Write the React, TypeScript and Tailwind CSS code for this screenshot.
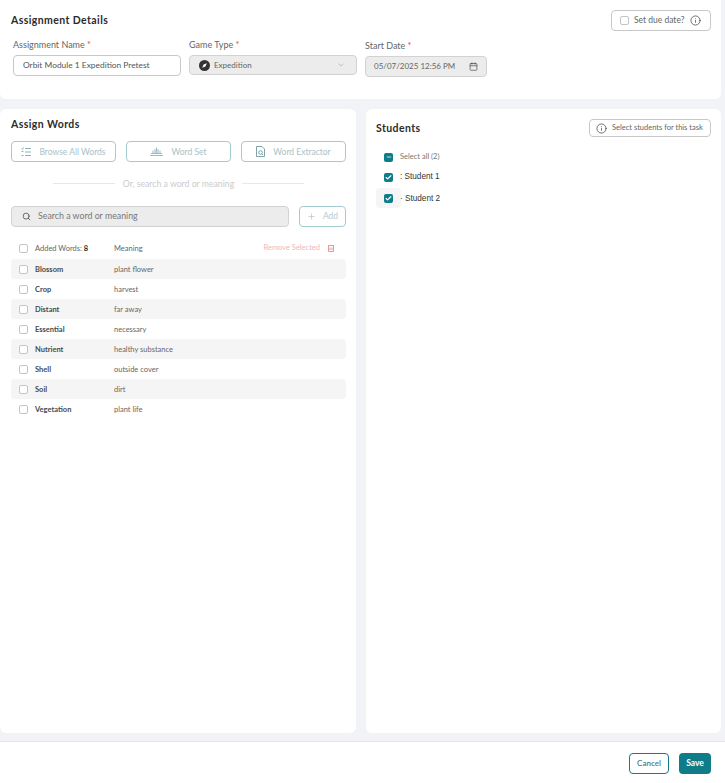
import React from 'react';
import { Search, Plus, Calendar, ChevronDown, Info, Check, Minus } from 'lucide-react';

const words = [
    ['Blossom', 'plant flower'],
    ['Crop', 'harvest'],
    ['Distant', 'far away'],
    ['Essential', 'necessary'],
    ['Nutrient', 'healthy substance'],
    ['Shell', 'outside cover'],
    ['Soil', 'dirt'],
    ['Vegetation', 'plant life'],
];

const Box = () => <span className="block shrink-0 w-[9px] h-[9px] rounded-[2px] border border-[#c4c4c4] bg-white"></span>;

const Ticked = ({ minus }: { minus?: boolean }) => (
    <span className="flex items-center justify-center w-[9px] h-[9px] rounded-[2px] bg-[#0f7c8a] text-white">
        {minus ? <Minus size={6} strokeWidth={3} /> : <Check size={7} strokeWidth={4} />}
    </span>
);

const Label = ({ text }: { text: string }) => (
    <div className="text-[9px] leading-[12px] text-[#666]">
        {text} <span className="text-[#e0492f]">*</span>
    </div>
);

const ToolButton = ({ icon, text }: { icon: React.ReactNode; text: string }) => (
    <button className="flex-1 h-[21px] flex items-center justify-center gap-[8px] rounded-[4px] border border-[#a3ccd1] text-[8.5px] text-[#a9c2c6]">
        {icon}
        <span className="pt-[1px]">{text}</span>
    </button>
);

const ListIcon = () => (
    <svg width="10" height="10" viewBox="0 0 10 10" fill="none" stroke="#8fb3b9" strokeWidth="1">
        <path d="M4 1.5h6M4 5h6M4 8.5h6" />
        <path d="M0.5 1.5l1 1 1-2M0.5 4.5h2M0.5 8.5h2" />
    </svg>
);

const SetIcon = () => (
    <svg width="13" height="9" viewBox="0 0 13 9" fill="none" stroke="#9bbcc1" strokeWidth="1">
        <path d="M0 8.5h13M1 6.5h11" />
        <path d="M3 6V3.5M5 6V2M6.5 6V0.5M8 6V2M10 6V3.5" />
    </svg>
);

const DocIcon = () => (
    <svg width="9" height="11" viewBox="0 0 9 11" fill="none" stroke="#7fa3a9" strokeWidth="1">
        <path d="M0.5 0.5h5.5l2.5 2.5v7.5h-8z" />
        <circle cx="4.5" cy="6.5" r="1.8" />
        <path d="M6 8l1 1" />
    </svg>
);

const GameIcon = () => (
    <svg width="11" height="11" viewBox="0 0 11 11" className="mr-[4px]">
        <circle cx="5.5" cy="5.5" r="5.5" fill="#333" />
        <path d="M7.8 3.2L6.4 6.4 3.2 7.8 4.6 4.6z" fill="#fff" />
    </svg>
);

const TrashIcon = () => (
    <svg width="6" height="7" viewBox="0 0 6 7" fill="none" stroke="#e79a95" strokeWidth="1" className="ml-[8px] mr-[12px]">
        <path d="M0 0.5h6M0.5 1v5.5h5V1M2 2.5v2.5M4 2.5v2.5" />
    </svg>
);

const App = () => {
    return (
        <div className="w-[725px] h-[783px] flex flex-col bg-[#f1f3f7] overflow-hidden font-['Lato',sans-serif]">
            <div className="flex-1 flex flex-col gap-[10px] pr-[4px] pb-[8px]">
                <section className="h-[99px] bg-white rounded-b-[6px] pl-[11px] pr-[10px] pt-[10px]">
                    <div className="flex items-center justify-between h-[21px]">
                        <h2 className="text-[10.5px] font-bold tracking-[0.4px] text-[#2b2b2b]">Assignment Details</h2>
                        <div className="flex items-center gap-[5px] h-[21px] w-[100px] pl-[8px] rounded-[4px] border border-[#c8c8c8] text-[8.5px] text-[#666]">
                            <Box />
                            Set due date?
                            <Info size={11} strokeWidth={1.5} className="ml-[1px] text-[#333]" />
                        </div>
                    </div>
                    <div className="flex items-start gap-[8px] ml-[2px] mt-[8px]">
                        <div className="w-[168px]">
                            <Label text="Assignment Name" />
                            <div className="mt-[4px] h-[21px] flex items-center px-[9px] pb-[1px] rounded-[4px] border border-[#c8c8c8] text-[8.4px] text-[#555]">Orbit Module 1 Expedition Pretest</div>
                        </div>
                        <div className="w-[168px]">
                            <Label text="Game Type" />
                            <div className="mt-[4px] h-[20px] flex items-center px-[9px] rounded-[4px] border border-[#d2d2d2] bg-[#ececec] text-[8px] text-[#666]">
                                <GameIcon />
                                <span className="pb-[1px]">Expedition</span>
                                <ChevronDown size={8} className="ml-auto mr-[2px] text-[#aaa]" />
                            </div>
                        </div>
                        <div className="w-[122px] mt-[1px]">
                            <Label text="Start Date" />
                            <div className="mt-[4px] h-[21px] flex items-center justify-between px-[8px] rounded-[4px] border border-[#d2d2d2] bg-[#ececec] text-[8px] text-[#666]">
                                <span className="pb-[1px]">05/07/2025 12:56 PM</span>
                                <Calendar size={9} className="text-[#555]" />
                            </div>
                        </div>
                    </div>
                </section>
                <div className="flex-1 flex gap-[10px]">
                    <section className="flex-1 bg-white rounded-[6px] pl-[11px] pr-[10px] pt-[10px]">
                        <h2 className="text-[10.5px] leading-[11px] font-bold tracking-[0.4px] text-[#2b2b2b]">Assign Words</h2>
                        <div className="flex gap-[10px] mt-[11px]">
                            <ToolButton icon={<ListIcon />} text="Browse All Words" />
                            <ToolButton icon={<SetIcon />} text="Word Set" />
                            <ToolButton icon={<DocIcon />} text="Word Extractor" />
                        </div>
                        <div className="flex items-center justify-center gap-[8px] mt-[16px] text-[8.7px] leading-[11px] text-[#cbcbcb]">
                            <span className="w-[62px] h-px bg-[#e8e8e8]"></span>
                            Or, search a word or meaning
                            <span className="w-[62px] h-px bg-[#e8e8e8]"></span>
                        </div>
                        <div className="flex gap-[10px] mt-[17px]">
                            <div className="flex-1 h-[21px] flex items-center gap-[7px] px-[10px] rounded-[4px] border border-[#d2d2d2] bg-[#ececec] text-[8.8px] text-[#777]">
                                <Search size={9} className="text-[#444]" />
                                <span className="pb-[1px]">Search a word or meaning</span>
                            </div>
                            <button className="w-[47px] h-[21px] flex items-center justify-center gap-[7px] rounded-[4px] border border-[#a3ccd1] text-[8.5px] text-[#b5cbce]">
                                <Plus size={9} />
                                Add
                            </button>
                        </div>
                        <div className="flex items-center h-[20px] mt-[11px] mb-[1px] pl-[8px] text-[7.5px] text-[#666]">
                            <Box />
                            <span className="w-[79px] ml-[7px] pt-[2px]">Added Words: <b className="text-[#333]">8</b></span>
                            <span className="pt-[2px]">Meaning</span>
                            <span className="ml-auto text-[#ecb8b5]">Remove Selected</span>
                            <TrashIcon />
                        </div>
                        {words.map(([word, meaning], i) => (
                            <div key={word} className={`flex items-center h-[20px] pl-[8px] rounded-[4px] text-[7.5px] ${i % 2 === 0 ? 'bg-[#f5f5f5]' : ''}`}>
                                <Box />
                                <span className="w-[79px] ml-[7px] pt-[1px] font-bold text-[#4a4a4a]">{word}</span>
                                <span className="pt-[1px] text-[#666]">{meaning}</span>
                            </div>
                        ))}
                    </section>
                    <section className="flex-1 bg-white rounded-[6px] px-[10px] pt-[10px]">
                        <div className="flex items-center justify-between h-[18px]">
                            <h2 className="pt-[1px] text-[10.5px] font-bold tracking-[0.4px] text-[#2b2b2b]">Students</h2>
                            <div className="flex items-center gap-[5px] h-[18px] w-[122px] pl-[6px] rounded-[4px] border border-[#c8c8c8] text-[7.5px] text-[#666]">
                                <Info size={11} strokeWidth={1.5} className="text-[#333]" />
                                Select students for this task
                            </div>
                        </div>
                        <div className="flex items-center h-[20px] mt-[10px] pl-[8px] text-[7.5px] text-[#777]">
                            <Ticked minus />
                            <span className="ml-[7px]">Select all (2)</span>
                        </div>
                        <div className="flex items-center h-[20px] pl-[8px] text-[8.2px] font-['Liberation_Sans',sans-serif] text-[#333]">
                            <Ticked />
                            <span className="ml-[7px]">: Student 1</span>
                        </div>
                        <div className="flex items-center h-[20px] mt-[1px] pl-[8px] text-[8.2px] font-['Liberation_Sans',sans-serif] text-[#333]">
                            <span className="flex items-center justify-center w-[25px] h-[20px] -ml-[8px] bg-[#f5f5f5] rounded-[4px]"><Ticked /></span>
                            <span className="-ml-[1px] pt-[2px]">· Student 2</span>
                        </div>
                    </section>
                </div>
            </div>
            <footer className="h-[42px] flex items-center justify-end gap-[10px] pt-[1px] pr-[14px] bg-white border-t border-[#e3e5e9]">
                <button className="w-[40px] h-[21px] rounded-[4px] border border-[#0f7c8a] text-[8px] font-semibold text-[#3f7f88]">Cancel</button>
                <button className="w-[32px] h-[21px] rounded-[4px] bg-[#0f7c8a] text-[8.5px] font-bold text-white">Save</button>
            </footer>
        </div>
    );
};

export default App;
